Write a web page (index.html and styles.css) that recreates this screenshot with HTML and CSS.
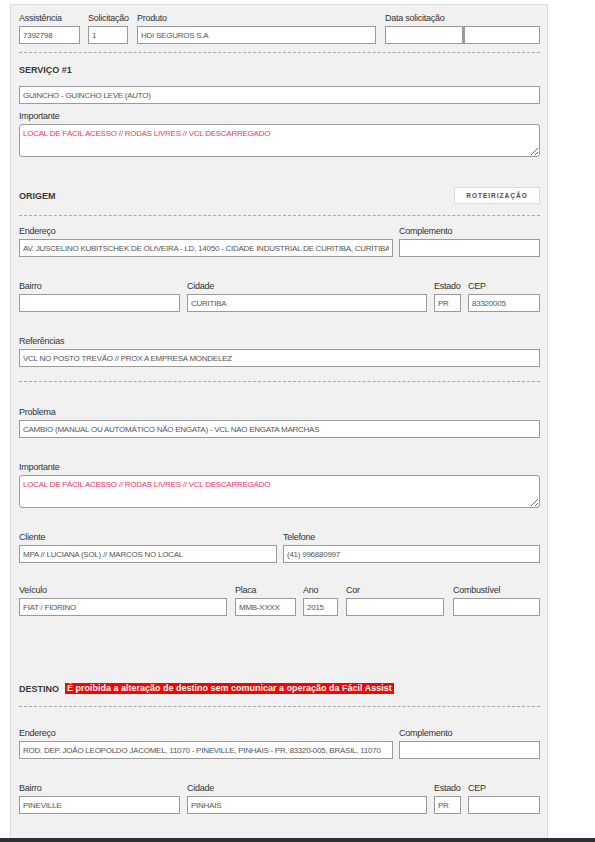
FILE: index.html
```html
<!DOCTYPE html>
<html lang="pt-BR">
<head>
<meta charset="utf-8">
<title>Serviço</title>
<link rel="stylesheet" href="styles.css">
</head>
<body>
<div class="panel">
  <div class="row row-top">
    <div class="field w-assist"><label>Assistência</label><input class="in" value="7392798" readonly></div>
    <div class="field w-solic"><label>Solicitação</label><input class="in" value="1" readonly></div>
    <div class="field w-produto"><label>Produto</label><input class="in" value="HDI SEGUROS S.A" readonly></div>
    <div class="field w-data"><label>Data solicitação</label>
      <div class="pair"><input class="in" readonly><input class="in" readonly></div>
    </div>
  </div>

  <div class="divider d-top"></div>

  <div class="title t-servico">SERVIÇO #1</div>
  <input class="in in-service" value="GUINCHO - GUINCHO LEVE (AUTO)" readonly>
  <div class="field f-imp1"><label>Importante</label><textarea class="ta" readonly>LOCAL DE FÁCIL ACESSO // RODAS LIVRES // VCL DESCARREGADO</textarea></div>

  <div class="header h-origem">
    <div class="title">ORIGEM</div>
    <button class="btn">ROTEIRIZAÇÃO</button>
  </div>
  <div class="divider d-origem"></div>

  <div class="row r-first">
    <div class="field w-end"><label>Endereço</label><input class="in" value="AV. JUSCELINO KUBITSCHEK DE OLIVEIRA - LD, 14050 - CIDADE INDUSTRIAL DE CURITIBA, CURITIBA - PR" readonly></div>
    <div class="field w-compl"><label>Complemento</label><input class="in" readonly></div>
  </div>
  <div class="row">
    <div class="field w-bairro"><label>Bairro</label><input class="in" readonly></div>
    <div class="field w-cidade"><label>Cidade</label><input class="in" value="CURITIBA" readonly></div>
    <div class="field w-estado"><label>Estado</label><input class="in" value="PR" readonly></div>
    <div class="field w-cep"><label>CEP</label><input class="in" value="83320005" readonly></div>
  </div>
  <div class="row">
    <div class="field w-full"><label>Referências</label><input class="in" value="VCL NO POSTO TREVÃO // PROX A EMPRESA MONDELEZ" readonly></div>
  </div>

  <div class="divider d-mid"></div>

  <div class="row r-problema">
    <div class="field w-full"><label>Problema</label><input class="in" value="CAMBIO (MANUAL OU AUTOMÁTICO NÃO ENGATA) - VCL NAO ENGATA MARCHAS" readonly></div>
  </div>
  <div class="row">
    <div class="field w-full"><label>Importante</label><textarea class="ta" readonly>LOCAL DE FÁCIL ACESSO // RODAS LIVRES // VCL DESCARREGADO</textarea></div>
  </div>
  <div class="row">
    <div class="field w-cliente"><label>Cliente</label><input class="in" value="MPA // LUCIANA (SOL) // MARCOS NO LOCAL" readonly></div>
    <div class="field w-fone"><label>Telefone</label><input class="in" value="(41) 996880997" readonly></div>
  </div>
  <div class="row r-veiculo">
    <div class="field w-veiculo"><label>Veículo</label><input class="in" value="FIAT / FIORINO" readonly></div>
    <div class="field w-placa"><label>Placa</label><input class="in" value="MMB-XXXX" readonly></div>
    <div class="field w-ano"><label>Ano</label><input class="in" value="2015" readonly></div>
    <div class="field w-cor"><label>Cor</label><input class="in" readonly></div>
    <div class="field w-comb"><label>Combustível</label><input class="in" readonly></div>
  </div>

  <div class="header h-destino">
    <div class="title">DESTINO</div>
    <span class="alert">É proibida a alteração de destino sem comunicar a operação da Fácil Assist</span>
  </div>
  <div class="divider d-destino"></div>

  <div class="row r-dest-first">
    <div class="field w-end"><label>Endereço</label><input class="in" value="ROD. DEP. JOÃO LEOPOLDO JACOMEL, 11070 - PINEVILLE, PINHAIS - PR, 83320-005, BRASIL, 11070" readonly></div>
    <div class="field w-compl"><label>Complemento</label><input class="in" readonly></div>
  </div>
  <div class="row">
    <div class="field w-bairro"><label>Bairro</label><input class="in" value="PINEVILLE" readonly></div>
    <div class="field w-cidade"><label>Cidade</label><input class="in" value="PINHAIS" readonly></div>
    <div class="field w-estado"><label>Estado</label><input class="in" value="PR" readonly></div>
    <div class="field w-cep"><label>CEP</label><input class="in" readonly></div>
  </div>
  <div class="row">
    <div class="field w-full"><label>Referências</label><input class="in" readonly></div>
  </div>
</div>
<div class="bottom-bar"></div>
</body>
</html>
```

FILE: styles.css
```css
* { box-sizing: border-box; }

html, body {
  margin: 0;
  padding: 0;
  background: #ffffff;
}

body {
  font-family: "Liberation Sans", Arial, sans-serif;
  color: #333;
}

.panel {
  margin: 4px 0 0 10px;
  width: 538px;
  background: #f1f1f1;
  border: 1px solid #dcdcdc;
  border-bottom: none;
  padding: 5px 7px 40px 8px;
  display: flex;
  flex-direction: column;
}

.row {
  display: flex;
  margin-top: 21px;
}

.row-top { margin-top: 0; }

.field { display: flex; flex-direction: column; }

.field label {
  display: block;
  height: 16px;
  line-height: 16px;
  font-size: 9px;
  letter-spacing: -0.25px;
  color: #333;
  white-space: nowrap;
}

.in {
  display: block;
  width: 100%;
  height: 18px;
  margin: 0;
  padding: 0 3px;
  border: 1px solid #9a9a9a;
  border-radius: 0;
  background: #fff;
  font-family: "Liberation Sans", Arial, sans-serif;
  font-size: 8px;
  letter-spacing: -0.25px;
  color: #555;
  outline: none;
}

.ta {
  display: block;
  width: 100%;
  height: 33px;
  margin: 0;
  padding: 4px 3px;
  border: 1px solid #9a9a9a;
  border-radius: 3px;
  background: #fff;
  font-family: "Liberation Sans", Arial, sans-serif;
  font-size: 8px;
  letter-spacing: -0.25px;
  color: #f2365e;
  resize: vertical;
  outline: none;
}

.pair { display: flex; }
.pair .in { width: 78px; }
.pair .in + .in { width: 77px; border-left-width: 2px; }

/* column widths */
.w-assist { width: 61px; margin-right: 8px; }
.w-solic { width: 40px; margin-right: 9px; }
.w-produto { width: 239px; margin-right: 9px; }
.w-data { width: 155px; }

.w-end { width: 374px; margin-right: 6px; }
.w-compl { width: 141px; }

.w-bairro { width: 161px; margin-right: 7px; }
.w-cidade { width: 240px; margin-right: 7px; }
.w-estado { width: 27px; margin-right: 7px; }
.w-cep { width: 72px; }

.w-full { width: 521px; }

.w-cliente { width: 258px; margin-right: 6px; }
.w-fone { width: 257px; }

.w-veiculo { width: 208px; margin-right: 8px; }
.w-placa { width: 61px; margin-right: 7px; }
.w-ano { width: 35px; margin-right: 8px; }
.w-cor { width: 98px; margin-right: 9px; }
.w-comb { width: 87px; }

.divider {
  height: 0;
  border-top: 1px dashed #a8a8a8;
}

.d-top { margin-top: 8px; }
.d-origem { margin-top: 11px; }
.d-mid { margin-top: 14px; }
.d-destino { margin-top: 9px; }

.title {
  font-size: 9px;
  font-weight: bold;
  line-height: 16px;
  color: #3a3a3a;
}

.t-servico { margin-top: 9px; }

.in-service { margin-top: 8px; }

.f-imp1 { margin-top: 4px; }

.header {
  display: flex;
  align-items: center;
  height: 17px;
}

.h-origem { margin-top: 30px; justify-content: space-between; }
.h-destino { margin-top: 64px; gap: 6px; }

.btn {
  width: 86px;
  height: 17px;
  margin: 0;
  padding: 0;
  background: #fff;
  border: 1px solid #dadada;
  font-family: "Liberation Sans", Arial, sans-serif;
  font-size: 6.5px;
  font-weight: bold;
  letter-spacing: 1px;
  color: #5a4848;
}

.alert {
  display: inline-block;
  background: #ff0000;
  color: #fff;
  font-size: 9px;
  font-weight: bold;
  line-height: 11px;
  height: 11px;
  padding: 0 2px;
  white-space: nowrap;
}

.r-first { margin-top: 7px; }
.r-problema { margin-top: 22px; }
.r-veiculo { margin-top: 19px; }
.r-dest-first { margin-top: 18px; }

.bottom-bar {
  position: fixed;
  left: 0;
  right: 0;
  bottom: 0;
  height: 4px;
  background: #2c3035;
}
```
